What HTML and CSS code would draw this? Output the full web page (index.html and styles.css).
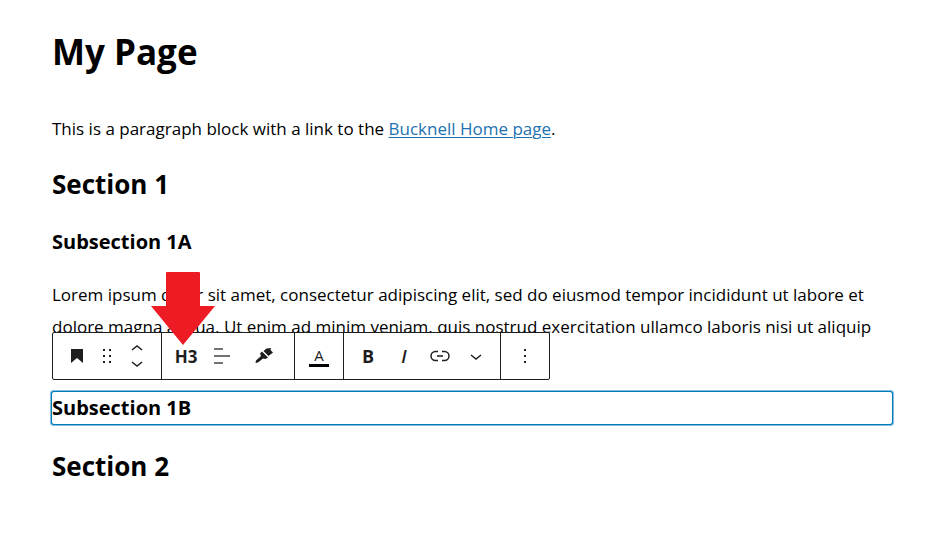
FILE: index.html
```html
<!DOCTYPE html>
<html lang="en">
<head>
  <meta charset="UTF-8">
  <title>My Page</title>
  <link rel="stylesheet" href="styles.css">
</head>
<body>

<main class="editor">
  <h1>My Page</h1>
  <p>This is a paragraph block with a link to the <a href="#">Bucknell Home page</a>.</p>

  <h2>Section 1</h2>
  <h3>Subsection 1A</h3>
  <p>Lorem ipsum dolor sit amet, consectetur adipiscing elit, sed do eiusmod tempor incididunt ut labore et dolore magna aliqua. Ut enim ad minim veniam, quis nostrud exercitation ullamco laboris nisi ut aliquip</p>

  <div class="block">
    <div class="toolbar" role="toolbar" aria-label="Block tools">
      <div class="group first">
        <button type="button" class="small" aria-label="Heading">
          <svg viewBox="0 0 24 24"><path d="M6 5v14l6-5 6 5V5z"/></svg>
        </button>
        <button type="button" class="small" aria-label="Drag">
          <svg viewBox="0 0 24 24"><path d="M8 5h2v2H8zM8 11h2v2H8zM8 17h2v2H8zM14 5h2v2h-2zM14 11h2v2h-2zM14 17h2v2h-2z"/></svg>
        </button>
        <div class="mover">
          <button type="button" aria-label="Move up">
            <svg viewBox="0 0 24 24"><path d="M7 14l5-4 5 4" class="line"/></svg>
          </button>
          <button type="button" aria-label="Move down">
            <svg viewBox="0 0 24 24"><path d="M7 10l5 4 5-4" class="line"/></svg>
          </button>
        </div>
      </div>
      <div class="group">
        <button type="button" class="level">H3</button>
        <button type="button" aria-label="Align text">
          <svg viewBox="0 0 24 24"><path d="M4 5h9M4 12h16M4 19h9" class="line soft"/></svg>
        </button>
        <button type="button" class="wide" aria-label="Styles">
          <svg viewBox="0 0 24 24">
            <path d="M14.500 4.500l4.500-.5-.5 2 2.500 2.500-4.500 3.500-5-5z"/>
            <path d="M10 7.500l6 6-2.500 1.500-2.500-.5-5 4-2.500.5.5-2.500 5-4.500-1-2.500z"/>
          </svg>
        </button>
      </div>
      <div class="group">
        <button type="button" class="color">A</button>
      </div>
      <div class="group">
        <button type="button" class="bold">B</button>
        <button type="button" class="italic">I</button>
        <button type="button" aria-label="Link">
          <svg viewBox="0 0 24 24"><path d="M10 16.500H7.500a4 4 0 0 1 0-9H10M14 7.500h2.500a4 4 0 0 1 0 9H14M9 12h6" class="line"/></svg>
        </button>
        <button type="button" aria-label="More">
          <svg viewBox="0 0 24 24"><path d="M7 11l5 4 5-4" class="line"/></svg>
        </button>
      </div>
      <div class="group">
        <button type="button" class="options" aria-label="Options">
          <svg viewBox="0 0 24 24"><path d="M11 5h2v2h-2zM11 11h2v2h-2zM11 17h2v2h-2z"/></svg>
        </button>
      </div>
      <svg class="arrow" viewBox="0 0 64 73"><path d="M15 1q0-1 1-1h32q1 0 1 1v33h15L32 73 0 34h15z"/></svg>
    </div>
    <h3 class="selected">Subsection 1B</h3>
  </div>

  <h2>Section 2</h2>
</main>

</body>
</html>
```
FILE: styles.css
```css
body {
  margin: 0;
  background: #fff;
  color: #000;
  font-family: "Open Sans", "Noto Sans", sans-serif;
}

.editor {
  padding: 27px 56px 32px 52px;
}

h1 {
  margin: 0 0 36px;
  font-size: 35px;
  line-height: 50px;
}

h2 {
  margin: 0 0 22px;
  font-size: 26px;
  line-height: 38px;
}

h3 {
  margin: 0 0 20px;
  font-size: 20px;
  line-height: 34px;
}

p {
  margin: 0 0 20px;
  font-size: 17px;
  line-height: 32px;
}

a {
  color: #2271b1;
  text-underline-offset: 2px;
  text-decoration-thickness: 1px;
}

.block {
  position: relative;
  padding-top: 29px;
  margin-bottom: 23px;
}

.selected {
  margin: 0;
  line-height: 32px;
  border-radius: 2px;
  box-shadow: 0 0 0 1px #007cba, 0 0 0 2px #80bddc;
}

/* floating toolbar over the selected block */
.toolbar {
  position: absolute;
  left: 0;
  bottom: 44px;
  display: flex;
  background: #fff;
  border: 1px solid #1e1e1e;
  border-radius: 2px;
}

.group {
  display: flex;
  align-items: center;
  height: 46px;
  padding: 0 6px;
  border-right: 1px solid #1e1e1e;
}

.group.first {
  padding: 0 9px;
}

.group:nth-child(5) {
  border-right: 0;
}

.toolbar button {
  display: flex;
  align-items: center;
  justify-content: center;
  width: 36px;
  height: 36px;
  padding: 0;
  border: 0;
  background: none;
  color: #1e1e1e;
  font-family: inherit;
  font-size: 16px;
}

.toolbar button svg {
  flex: none;
  width: 24px;
  height: 24px;
  fill: #1e1e1e;
}

.toolbar .line {
  fill: none;
  stroke: #1e1e1e;
  stroke-width: 1.5;
}

.toolbar .soft {
  stroke: #444;
}

.toolbar .small {
  width: 30px;
}

.toolbar .mover button {
  width: 30px;
  height: 16px;
}

.toolbar .level {
  font-size: 17px;
  font-weight: 700;
}

.toolbar .wide {
  width: 48px;
}

.toolbar .color {
  flex-direction: column;
  font-size: 15px;
  line-height: 18px;
}

.color::after {
  content: "";
  width: 20px;
  height: 3px;
  background: #000;
}

.toolbar .bold {
  font-size: 18px;
  font-weight: 700;
}

.toolbar .italic {
  font-size: 18px;
  font-style: italic;
  font-weight: 600;
}

.arrow {
  position: absolute;
  left: 98px;
  bottom: 34px;
  width: 64px;
  height: 73px;
  fill: #ed1c24;
}
```
